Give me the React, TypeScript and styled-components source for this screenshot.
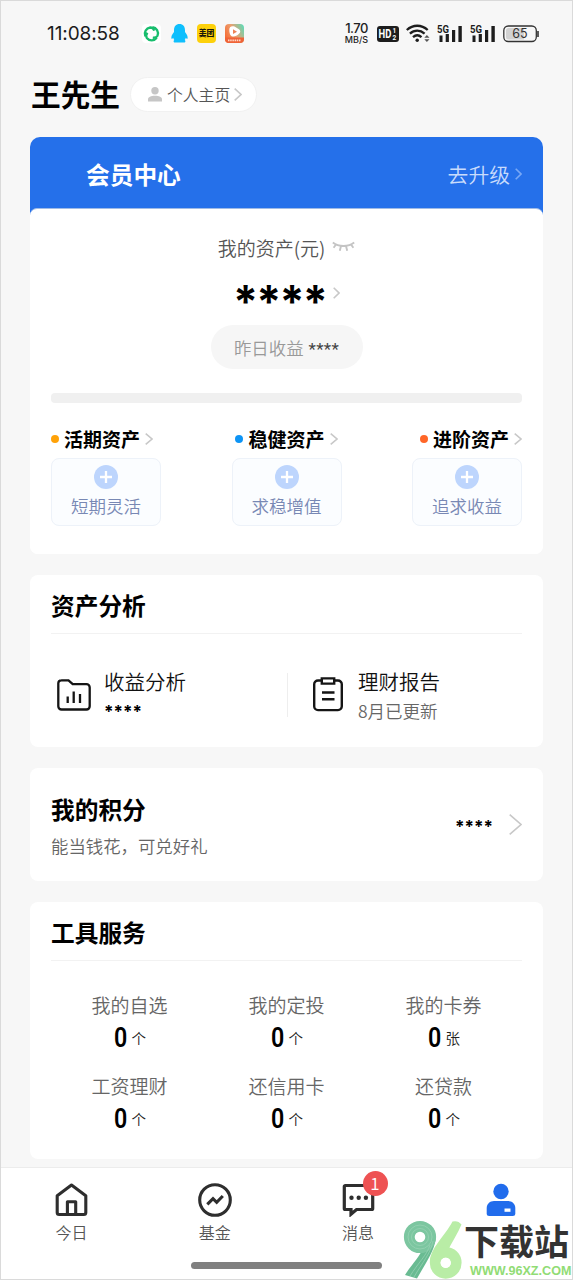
import React from "react";
import styled, { createGlobalStyle } from "styled-components";

const GlobalStyle = createGlobalStyle`
  * { box-sizing: border-box; }
  body {
    margin: 0;
    background: #f7f7f7;
    font-family: "Noto Sans CJK SC", sans-serif;
    color: #000;
  }
  svg { display: block; flex: none; }
`;

const Page = styled.div`
  position: relative;
  width: 573px;
  height: 1280px;
  display: flex;
  flex-direction: column;
  background: #f7f7f7;
  border: 1px solid #dadada;
  overflow: hidden;
  white-space: nowrap;
`;

const StatusBar = styled.header`
  display: flex;
  align-items: center;
  height: 64px;
  padding: 1px 33px 0 46px;
`;

const Clock = styled.time`
  width: 95px;
  font: 400 19px/24px Inter, sans-serif;
  letter-spacing: -0.1px;
  color: #1c1c1c;
`;

const AppIcons = styled.div`
  display: flex;
  gap: 8.5px;
  flex: 1;
`;

const Speed = styled.div`
  display: flex;
  flex-direction: column;
  align-items: center;
  width: 25px;
  margin-right: 8px;
  font-family: Inter, sans-serif;
  font-weight: 500;
  color: #222;
`;
const SpeedValue = styled.span`
  font-size: 13px;
  line-height: 11px;
  letter-spacing: -0.5px;
`;
const SpeedUnit = styled.span`
  font-size: 9px;
  line-height: 11px;
`;

const StatusIcons = styled.div`
  display: flex;
  align-items: center;
  gap: 7px;
`;

const Greeting = styled.div`
  display: flex;
  align-items: center;
  height: 62px;
  padding: 0 0 4px 30px;
`;
const UserName = styled.h1`
  margin: 0;
  width: 99px;
  font-size: 29.7px;
  line-height: 34px;
  font-weight: 700;
`;
const HomePill = styled.button`
  display: flex;
  align-items: center;
  width: 127px;
  height: 35px;
  padding: 1px 0 0 16px;
  gap: 4px;
  border: 1px solid #f1f1f1;
  border-radius: 18px;
  background: #fff;
  font: 350 15.8px/21px "Noto Sans CJK SC", sans-serif;
  color: #555;
`;

const Stack = styled.main`
  display: flex;
  flex-direction: column;
  gap: 21px;
  flex: 1;
  width: 513px;
  margin: 10px 0 0 29px;
`;

const AssetCard = styled.section`
  height: 417px;
  border-radius: 10px 10px 8px 8px;
  background: linear-gradient(#2570ea 78px, #fff 78px);
`;
const MemberBanner = styled.div`
  display: flex;
  align-items: center;
  justify-content: space-between;
  height: 71px;
  padding: 2px 21px 0 56px;
  color: #fff;
`;
const BannerTitle = styled.h2`
  margin: 0;
  font-size: 23.7px;
  line-height: 28px;
  font-weight: 700;
`;
const Upgrade = styled.span`
  display: flex;
  align-items: center;
  gap: 5px;
  font-size: 20.8px;
  font-weight: 350;
  line-height: 26px;
  color: #c9dcfc;
`;
const AssetBody = styled.div`
  display: flex;
  flex-direction: column;
  align-items: center;
  height: 346px;
  padding: 24px 21px 0;
  border-top: 1px solid #9fbbe6;
  border-radius: 7px 7px 8px 8px;
  background: #fff;
`;
const AssetLabel = styled.div`
  display: flex;
  align-items: center;
  gap: 7px;
  height: 28px;
  font-size: 19px;
  font-weight: 350;
  color: #555;
`;
const Total = styled.div`
  display: flex;
  align-items: center;
  justify-content: center;
  gap: 7px;
  height: 64px;
`;
const Stars = styled.span<{ $size: number; $pitch?: number; $drop: number }>`
  display: block;
  font-family: Inter, sans-serif;
  font-size: ${(p) => p.$size}px;
  font-weight: 700;
  letter-spacing: ${(p) => p.$pitch ?? 0}px;
  line-height: 20px;
  padding-top: ${(p) => p.$drop}px;
  color: #000;
`;
const YesterdayPill = styled.div`
  display: flex;
  align-items: center;
  justify-content: center;
  gap: 5px;
  width: 152px;
  height: 44px;
  border-radius: 22px;
  background: #f6f6f6;
  font-size: 17.4px;
  font-weight: 350;
  color: #999;
`;
const SmallStars = styled.span`
  padding-top: 3px;
  font: 400 17px/20px Roboto, sans-serif;
  letter-spacing: 0.3px;
  color: #444;
`;
const ProportionBar = styled.div`
  width: 471px;
  height: 10px;
  margin: 24px 0 21px;
  border-radius: 4px;
  background: #f0f0f0;
`;
const Spread = styled.div`
  display: flex;
  justify-content: space-between;
  width: 471px;
`;
const KindTitle = styled.div`
  display: flex;
  align-items: center;
  height: 30px;
  font-size: 19px;
  line-height: 28px;
  font-weight: 700;
`;
const Dot = styled.i<{ $color: string }>`
  width: 8px;
  height: 8px;
  margin-right: 5px;
  border-radius: 50%;
  background: ${(p) => p.$color};
`;
const KindName = styled.span`
  margin-right: 5px;
`;
const KindTile = styled.div`
  display: flex;
  flex-direction: column;
  align-items: center;
  width: 110px;
  height: 68px;
  margin-top: 4px;
  padding-top: 6px;
  border: 1px solid #edf2f9;
  border-radius: 8px;
  background: #fbfdff;
  font-size: 17.5px;
  font-weight: 350;
  line-height: 24px;
  color: #7888b4;
`;
const TileText = styled.span`
  margin-top: 5px;
`;

const Card = styled.section<{ $height: number }>`
  height: ${(p) => p.$height}px;
  padding: 0 21px;
  border-radius: 8px;
  background: #fff;
`;
const SectionTitle = styled.h2`
  margin: 0;
  height: 59px;
  padding-top: 14px;
  font-size: 23.7px;
  line-height: 32px;
  font-weight: 700;
  border-bottom: 1px solid #f2f2f2;
`;
const AnalysisRow = styled.div`
  display: flex;
  align-items: center;
  height: 121px;
`;
const AnalysisItem = styled.div<{ $width: number; $indent: number; $gap: number }>`
  display: flex;
  align-items: center;
  width: ${(p) => p.$width}px;
  height: 44px;
  padding-left: ${(p) => p.$indent}px;
  gap: ${(p) => p.$gap}px;
  & + & { border-left: 1px solid #eee; }
`;
const ItemName = styled.div`
  height: 30px;
  font-size: 20.5px;
  font-weight: 350;
  line-height: 32px;
  color: #111;
`;
const ItemNote = styled.div`
  height: 30px;
  font-size: 17.5px;
  font-weight: 350;
  line-height: 31px;
  color: #666;
`;

const PointsCard = styled(Card)`
  display: flex;
  align-items: center;
  justify-content: space-between;
`;
const PointsText = styled.div`
  padding-top: 5px;
`;
const PointsTitle = styled.h2`
  margin: 0;
  font-size: 23.7px;
  line-height: 38px;
  font-weight: 700;
`;
const PointsNote = styled.div`
  font-size: 17.4px;
  line-height: 36px;
  font-weight: 350;
  color: #666;
`;
const PointsValue = styled.div`
  display: flex;
  align-items: center;
  gap: 16px;
`;

const ToolGrid = styled.div`
  display: grid;
  grid-template-columns: repeat(3, 157px);
  grid-auto-rows: 81px;
  padding-top: 30px;
`;
const Tool = styled.div`
  display: flex;
  flex-direction: column;
  align-items: center;
`;
const ToolName = styled.span`
  font-size: 19px;
  line-height: 28px;
  font-weight: 350;
  color: #666;
`;
const ToolCount = styled.span`
  display: flex;
  align-items: center;
  gap: 3px;
  height: 38px;
`;
const Digit = styled.b`
  font: 600 27px/36px Roboto, sans-serif;
  transform: scaleX(0.86);
`;
const Unit = styled.span`
  font-size: 14.5px;
  line-height: 36px;
  font-weight: 350;
  color: #222;
`;

const TabBar = styled.nav`
  display: grid;
  grid-template-columns: repeat(4, 143.25px);
  height: 112px;
  padding-top: 15px;
  border-top: 1px solid #ececec;
  background: #fff;
`;
const Tab = styled.a`
  position: relative;
  display: flex;
  flex-direction: column;
  align-items: center;
  height: 66px;
  padding-right: 2px;
  font-size: 16px;
  line-height: 31px;
  font-weight: 350;
  color: #555;
`;
const Badge = styled.span`
  position: absolute;
  top: -12px;
  left: 75px;
  width: 25px;
  height: 25px;
  border-radius: 50%;
  background: #ee5253;
  color: #fff;
  font-size: 17px;
  font-weight: 350;
  line-height: 24px;
  text-align: center;
`;
const HomeIndicator = styled.div`
  position: absolute;
  left: 190px;
  bottom: 10px;
  width: 191px;
  height: 7px;
  border-radius: 4px;
  background: #808080;
`;

const Watermark = styled.aside`
  position: absolute;
  right: -1px;
  bottom: -1px;
  display: flex;
  width: 172px;
  height: 62px;
  background: #fff;
`;
const MarkWords = styled.div`
  display: flex;
  flex-direction: column;
`;
const MarkName = styled.span`
  height: 45px;
  padding-left: 1px;
  font-size: 35px;
  line-height: 43px;
  font-weight: 700;
  color: #333;
`;
const MarkUrl = styled.span`
  padding-left: 7px;
  font: 700 12.6px/17px "Liberation Sans", sans-serif;
  color: #91dc75;
`;

const Chevron = ({ w = 7, h = 12, color = "#c8c8c8", stroke = 1.6 }) => (
  <svg width={w} height={h} viewBox={`0 0 ${w} ${h}`} fill="none" stroke={color} strokeWidth={stroke}>
    <path d={`M.7 .7L${w - 1} ${h / 2}L.7 ${h - 0.7}`} />
  </svg>
);

const leaf = "M3.3 12.2A6.3 6.3 0 0 1 8.2 3.5Q11 3.4 12.3 6.6";
const BrowserIcon = () => (
  <svg width="19" height="19" viewBox="0 0 19 19" fill="none">
    <rect width="19" height="19" rx="4" fill="#fff" />
    <g stroke="#18bd6d" strokeWidth="2.3">
      {[0, 120, 240].map((turn) => (
        <path key={turn} d={leaf} transform={`rotate(${turn} 9.5 9.7)`} />
      ))}
    </g>
  </svg>
);
const PenguinIcon = () => (
  <svg width="19" height="19" viewBox="0 0 19 19">
    <path fill="#0fbffd" d="M9.5 0C5.9 0 4 2.5 4 6.2V8C2.2 10.3 1 12.5 1.4 14.5c.3.8 1.2 0 1.8-.8.2.9.6 1.6 1.1 2.2-.9.7-1 2 0 2.6h10.4c1-.6.9-1.9 0-2.6.5-.6.9-1.3 1.1-2.2.6.8 1.500 1.600 1.800.8.4-2-.8-4.200-2.600-6.500V6.200C15 2.500 13.100 0 9.500 0z" />
  </svg>
);
const MeituanIcon = () => (
  <svg width="19" height="19" viewBox="0 0 19 19">
    <rect width="19" height="19" rx="4" fill="#fdd10b" />
    <text x="9.5" y="12.4" textAnchor="middle" fontSize="7.8" fontWeight="900" fontFamily="Noto Sans CJK SC, sans-serif" fill="#1a1708">美团</text>
  </svg>
);
const VideoIcon = () => (
  <svg width="19" height="19" viewBox="0 0 19 19">
    <defs>
      <linearGradient id="video" x1="0" y1=".7" x2="1" y2=".2">
        <stop offset="0" stopColor="#f76a32" />
        <stop offset=".5" stopColor="#eba070" />
        <stop offset="1" stopColor="#65d8b4" />
      </linearGradient>
    </defs>
    <rect width="19" height="19" rx="4" fill="url(#video)" />
    <path d="M0 13.500H19V15a4 4 0 0 1-4 4H4a4 4 0 0 1-4-4z" fill="#ef6337" />
    <path d="M4.300 5.500C4.300 2.500 7 1.500 9.500 2.600L14 5.300c1.700 1.200 1.700 3.200 0 4.500-2.300 2.200-5 3.500-7.400 2.400C4.600 11 4.300 8 4.300 5.500z" fill="#fff" />
    <path d="M8 5.300l4 2.400-4 2.400z" fill="#ee8457" />
    <path d="M3 16.400h13" stroke="#ffd9c8" strokeWidth="1.600" strokeDasharray="1.500 .7" />
  </svg>
);

const HdIcon = () => (
  <svg width="22" height="16" viewBox="0 0 22 16" fontFamily="Roboto, sans-serif" fontWeight="700" fill="#fff">
    <rect width="22" height="16" rx="3" fill="#1d1d1d" />
    <text x="1.6" y="12.3" fontSize="12" textLength="12.8" lengthAdjust="spacingAndGlyphs">HD</text>
    <text x="15.6" y="7" fontSize="6.5">1</text>
    <text x="15.6" y="14" fontSize="6.5">2</text>
  </svg>
);
const WifiIcon = () => (
  <svg width="24" height="19" viewBox="0 0 24 19" fill="none" stroke="#1d1d1d" strokeWidth="2.3">
    <path d="M.8 6C7 .3 15.500 .3 21.700 6M3.900 9.700c4.400-4 10.300-4 14.700 0M7 13.200c2.600-2.300 5.900-2.300 8.500 0" />
    <circle cx="11.2" cy="16.3" r="1.7" fill="#1d1d1d" stroke="none" />
    <path d="M18.300 13.700l2.600-2.700 2.600 2.700zM18.300 15.300l2.600 2.700 2.600-2.700z" fill="#555" stroke="none" />
  </svg>
);
const SignalIcon = () => (
  <svg width="26" height="18" viewBox="0 0 26 18" fill="#1d1d1d">
    <path d="M2.500 10.500h3v6.500h-3zM8.700 9h3.200v8H8.700zM15 5h3.200v12H15zM21.400 1h3.400v16h-3.400z" />
    <text x="0" y="7.9" fontFamily="Roboto, sans-serif" fontWeight="700" fontSize="10" textLength="12" lengthAdjust="spacingAndGlyphs">5G</text>
  </svg>
);
const BatteryIcon = () => (
  <svg width="36" height="18" viewBox="0 0 36 18">
    <rect x=".8" y="1" width="32.5" height="15.5" rx="4.5" fill="#f7f7f7" stroke="#333" strokeWidth="1.3" />
    <path d="M5.500 3H21v11.500H5.500a2.500 2.500 0 0 1-2.500-2.500V5.500A2.500 2.500 0 0 1 5.500 3z" fill="#d2d2d2" />
    <path d="M35 6v6" stroke="#333" strokeWidth="1.6" />
    <text x="17" y="13.3" textAnchor="middle" fontFamily="Inter, sans-serif" fontSize="12.5" fill="#333">65</text>
  </svg>
);

const PersonIcon = () => (
  <svg width="16" height="15" viewBox="0 0 16 15" fill="#c6c6c6">
    <circle cx="8" cy="3.8" r="3.7" />
    <path d="M1 14.500v-2C1 10 4 8.800 8 8.800s7 1.200 7 3.700v2z" />
  </svg>
);
const ClosedEyeIcon = () => (
  <svg width="23" height="12" viewBox="0 0 23 12" fill="none" stroke="#c4c4c4" strokeWidth="1.9">
    <path d="M.8 1.500c6 4.600 15.400 4.600 21.400 0M4 3.500L1.600 6.700M9 5L7.800 9.800M14 5l1.200 4.800M19 3.500l2.400 3.200" />
  </svg>
);
const PlusIcon = () => (
  <svg width="24" height="24" viewBox="0 0 24 24">
    <circle cx="12" cy="12" r="12" fill="#bdd5fd" />
    <path d="M12 6v12M6 12h12" stroke="#fff" strokeWidth="2.3" />
  </svg>
);
const FolderChartIcon = () => (
  <svg width="34" height="32" viewBox="0 0 34 32" fill="none" stroke="#151515" strokeWidth="2.3">
    <path d="M4.200 1.300H11.500L15.700 5.200H29.500a3.200 3.200 0 0 1 3.200 3.200V27.300a3.200 3.200 0 0 1-3.200 3.200H4.500a3.200 3.200 0 0 1-3.200-3.200V4.200a3 3 0 0 1 3-2.900z" />
    <path d="M10.700 17.500v6.500M16.700 12.500V24M23 15v9" />
  </svg>
);
const ClipboardIcon = () => (
  <svg width="30" height="35" viewBox="0 0 30 35" fill="none" stroke="#151515" strokeWidth="2.4">
    <path d="M8.500 3.500H5a3.800 3.800 0 0 0-3.800 3.800v22A3.800 3.800 0 0 0 5 33.100h20a3.800 3.800 0 0 0 3.800-3.800v-22A3.800 3.800 0 0 0 25 3.500h-3.500" />
    <path d="M8.800 1.400h12.400v5.200H8.800zM9 15.500h12.500M9 22.300h12.500" />
  </svg>
);

const HomeIcon = () => (
  <svg width="33" height="34" viewBox="0 0 33 34" fill="none" stroke="#2e2e2e" strokeWidth="3.1" strokeLinejoin="round">
    <path d="M2.200 12.700L16.500 2l14.300 10.700V29.500a2 2 0 0 1-2 2H4.200a2 2 0 0 1-2-2z" />
    <path d="M12.400 31V18.800h8.300V31" />
  </svg>
);
const FundIcon = () => (
  <svg width="34" height="34" viewBox="0 0 34 34" fill="none" stroke="#2e2e2e" strokeWidth="3.1">
    <circle cx="17" cy="17" r="15.3" />
    <path d="M9.300 21.300L15 15.600l3.700 3.700 6.100-6.300" />
  </svg>
);
const MessageIcon = () => (
  <svg width="33" height="34" viewBox="0 0 33 34" fill="none" stroke="#2e2e2e" strokeWidth="3.2">
    <path d="M3.300 2.500H29.700a1 1 0 0 1 1 1V25.500a1 1 0 0 1-1 1H14.500L9 31.200V26.500H3.300a1 1 0 0 1-1-1V3.500a1 1 0 0 1 1-1z" />
    <g fill="#2e2e2e" stroke="none">
      <circle cx="9.5" cy="14.7" r="2.2" />
      <circle cx="16.7" cy="14.7" r="2.2" />
      <circle cx="23.9" cy="14.7" r="2.2" />
    </g>
  </svg>
);
const MineIcon = () => (
  <svg width="30" height="34" viewBox="0 0 30 34" fill="#216cec">
    <circle cx="15" cy="8.5" r="7.7" />
    <path d="M8 18h14c4 0 7.300 2.800 7.300 7v5.500c0 1.700-1 2.500-2.500 2.500H3.200C1.600 33 .7 32.200.7 30.500V25c0-4.200 3.300-7 7.300-7z" />
    <path d="M18.500 25.500h6v3.300h-6z" fill="#fff" />
  </svg>
);
const MarkLogo = () => (
  <svg width="62" height="62" viewBox="0 0 62 62" fill="none">
    <path d="M34.700 21C33 34 24 46 16 60.500L4 57C10 47 19 39 23 28z" fill="#69bb92" />
    <circle cx="19" cy="19" r="10.7" stroke="#7cc6a0" strokeWidth="10.8" />
    <path d="M32 23C30 35 21 45 13 59M29 27C26 37 17 45 9 58" stroke="#95d1b2" strokeWidth=".8" />
    <circle cx="19" cy="19" r="8.5" stroke="#97d3b4" strokeWidth=".8" />
    <circle cx="19" cy="19" r="12" stroke="#97d3b4" strokeWidth=".8" />
    <path d="M51.500 3.500Q57 2 60.500 6.500C57 15 51 24 46 34L29 44C29 30 44 18 51.500 3.500z" fill="#b9eda6" />
    <circle cx="44.7" cy="44.8" r="10.5" stroke="#b9eda6" strokeWidth="10.8" />
    <circle cx="44.7" cy="44.8" r="5.1" fill="#fff" />
  </svg>
);

const kinds = [
  { name: "活期资产", note: "短期灵活", color: "#ffa208" },
  { name: "稳健资产", note: "求稳增值", color: "#0d94f5" },
  { name: "进阶资产", note: "追求收益", color: "#ff6628" },
];
const tools = [
  ["我的自选", "个"],
  ["我的定投", "个"],
  ["我的卡券", "张"],
  ["工资理财", "个"],
  ["还信用卡", "个"],
  ["还贷款", "个"],
];

export default function App() {
  return (
    <Page>
      <GlobalStyle />
      <StatusBar>
        <Clock>11:08:58</Clock>
        <AppIcons>
          <BrowserIcon />
          <PenguinIcon />
          <MeituanIcon />
          <VideoIcon />
        </AppIcons>
        <Speed>
          <SpeedValue>1.70</SpeedValue>
          <SpeedUnit>MB/S</SpeedUnit>
        </Speed>
        <StatusIcons>
          <HdIcon />
          <WifiIcon />
          <SignalIcon />
          <SignalIcon />
          <BatteryIcon />
        </StatusIcons>
      </StatusBar>

      <Greeting>
        <UserName>王先生</UserName>
        <HomePill>
          <PersonIcon />
          个人主页
          <Chevron w={8} h={13} />
        </HomePill>
      </Greeting>

      <Stack>
        <AssetCard>
          <MemberBanner>
            <BannerTitle>会员中心</BannerTitle>
            <Upgrade>
              去升级
              <Chevron w={7} h={12} color="#79a8f6" />
            </Upgrade>
          </MemberBanner>
          <AssetBody>
            <AssetLabel>
              我的资产(元)
              <ClosedEyeIcon />
            </AssetLabel>
            <Total>
              <Stars $size={45} $pitch={-1.9} $drop={18}>****</Stars>
              <Chevron />
            </Total>
            <YesterdayPill>
              昨日收益
              <SmallStars>****</SmallStars>
            </YesterdayPill>
            <ProportionBar />
            <Spread>
              {kinds.map((k) => (
                <KindTitle key={k.name}>
                  <Dot $color={k.color} />
                  <KindName>{k.name}</KindName>
                  <Chevron w={8} h={12} />
                </KindTitle>
              ))}
            </Spread>
            <Spread>
              {kinds.map((k) => (
                <KindTile key={k.note}>
                  <PlusIcon />
                  <TileText>{k.note}</TileText>
                </KindTile>
              ))}
            </Spread>
          </AssetBody>
        </AssetCard>

        <Card $height={172}>
          <SectionTitle>资产分析</SectionTitle>
          <AnalysisRow>
            <AnalysisItem $width={236} $indent={6} $gap={13}>
              <FolderChartIcon />
              <div>
                <ItemName>收益分析</ItemName>
                <ItemNote>
                  <Stars $size={17} $drop={7}>****</Stars>
                </ItemNote>
              </div>
            </AnalysisItem>
            <AnalysisItem $width={235} $indent={25} $gap={15}>
              <ClipboardIcon />
              <div>
                <ItemName>理财报告</ItemName>
                <ItemNote>8月已更新</ItemNote>
              </div>
            </AnalysisItem>
          </AnalysisRow>
        </Card>

        <PointsCard $height={113}>
          <PointsText>
            <PointsTitle>我的积分</PointsTitle>
            <PointsNote>能当钱花，可兑好礼</PointsNote>
          </PointsText>
          <PointsValue>
            <Stars $size={17} $drop={5}>****</Stars>
            <Chevron w={13} h={21} />
          </PointsValue>
        </PointsCard>

        <Card $height={257}>
          <SectionTitle>工具服务</SectionTitle>
          <ToolGrid>
            {tools.map(([name, unit]) => (
              <Tool key={name}>
                <ToolName>{name}</ToolName>
                <ToolCount>
                  <Digit>0</Digit>
                  <Unit>{unit}</Unit>
                </ToolCount>
              </Tool>
            ))}
          </ToolGrid>
        </Card>
      </Stack>

      <TabBar>
        <Tab><HomeIcon />今日</Tab>
        <Tab><FundIcon />基金</Tab>
        <Tab><MessageIcon />消息<Badge>1</Badge></Tab>
        <Tab><MineIcon /></Tab>
      </TabBar>
      <HomeIndicator />
      <Watermark>
        <MarkLogo />
        <MarkWords>
          <MarkName>下载站</MarkName>
          <MarkUrl>WWW.96XZ.COM</MarkUrl>
        </MarkWords>
      </Watermark>
    </Page>
  );
}
